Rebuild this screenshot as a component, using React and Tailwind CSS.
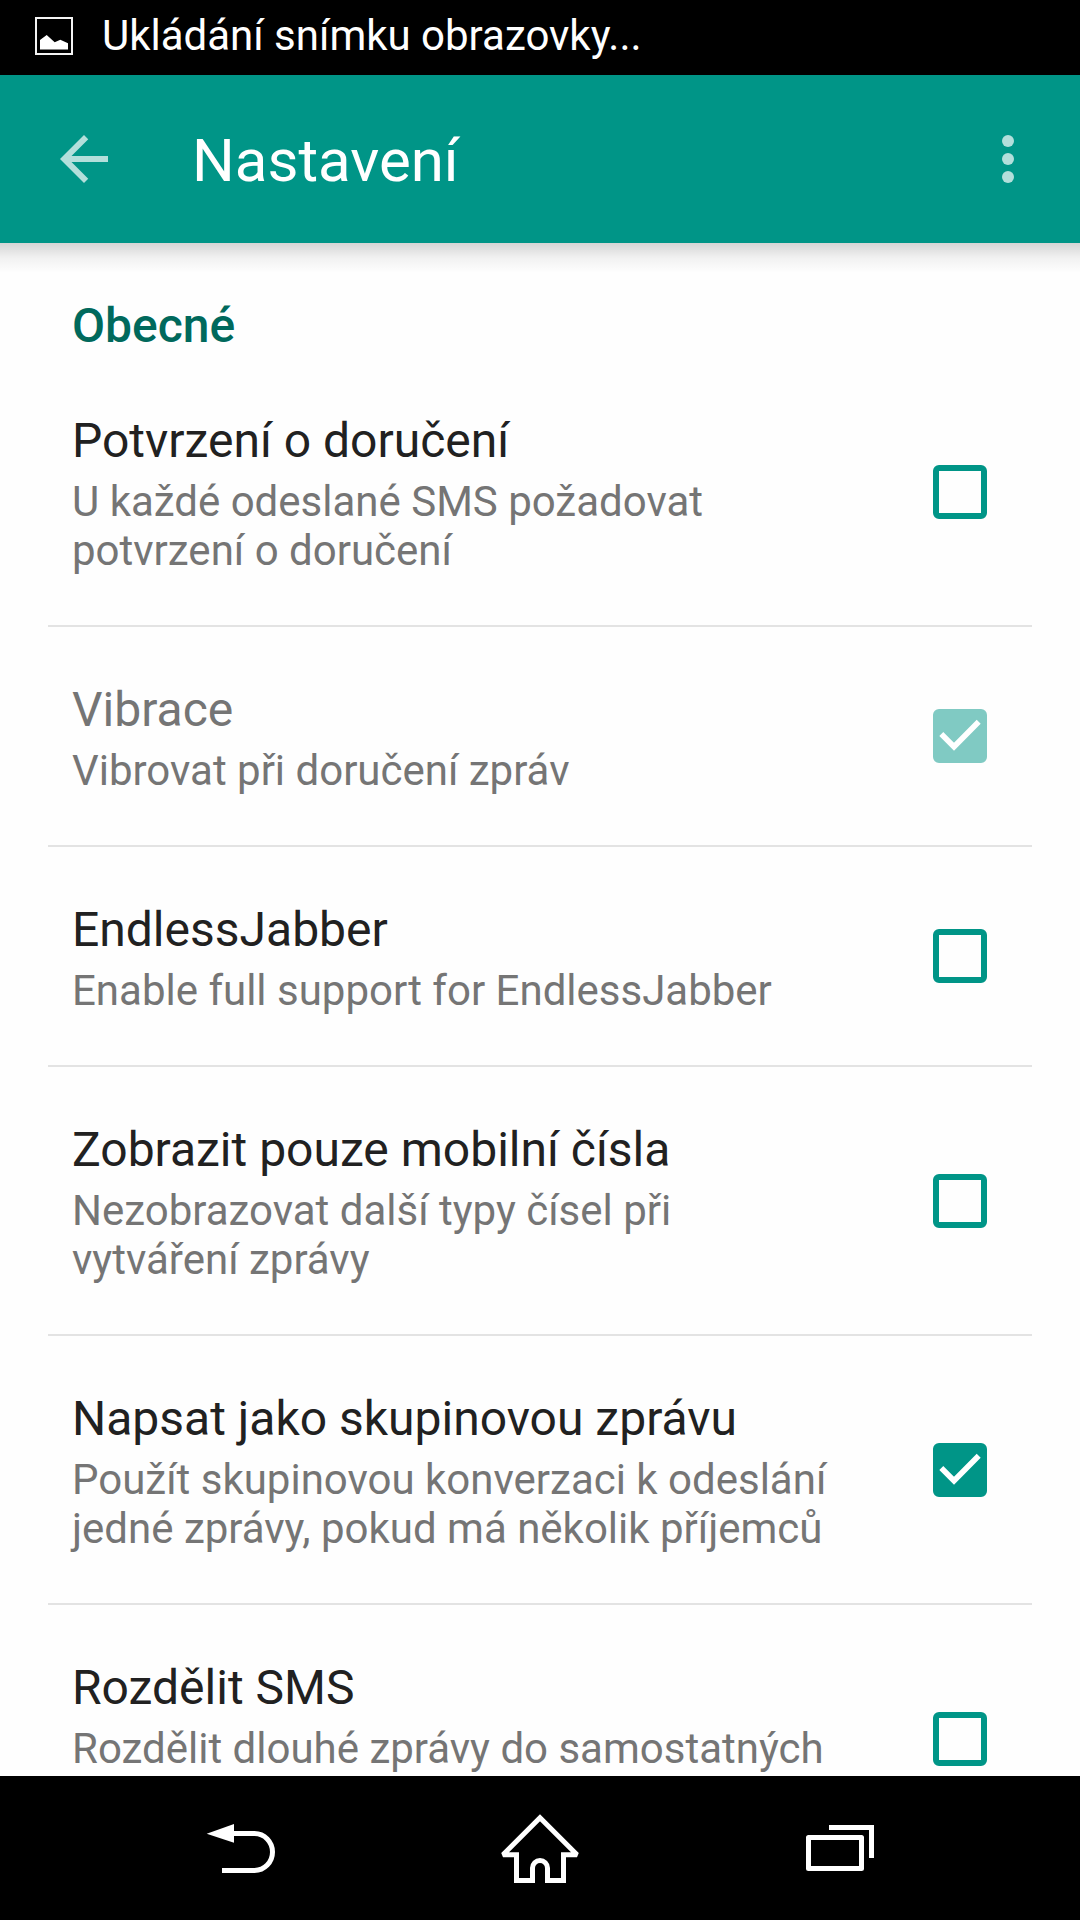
import { useState } from "react";

const SETTINGS = [
  {
    id: "delivery",
    title: "Potvrzení o doručení",
    summary: "U každé odeslané SMS požadovat potvrzení o doručení",
  },
  {
    id: "vibrate",
    title: "Vibrace",
    summary: "Vibrovat při doručení zpráv",
    checked: true,
    disabled: true,
  },
  {
    id: "endless",
    title: "EndlessJabber",
    summary: "Enable full support for EndlessJabber",
  },
  {
    id: "mobile-only",
    title: "Zobrazit pouze mobilní čísla",
    summary: "Nezobrazovat další typy čísel při vytváření zprávy",
  },
  {
    id: "group",
    title: "Napsat jako skupinovou zprávu",
    summary: "Použít skupinovou konverzaci k odeslání jedné zprávy, pokud má několik příjemců",
    checked: true,
  },
  {
    id: "split",
    title: "Rozdělit SMS",
    summary: "Rozdělit dlouhé zprávy do samostatných",
    tall: true,
  },
];

function StatusBar() {
  return (
    <div className="flex h-[75px] shrink-0 items-center bg-black pb-[3px] pl-[35px] text-white">
      <svg className="size-[38px] shrink-0" viewBox="0 0 38 38" aria-hidden="true">
        <rect x="1" y="1" width="36" height="36" fill="none" stroke="#f4f4f4" strokeWidth="2" />
        <path d="M5 32.500V23l6.700-5 8 7.300 5.600-2.600 7.700 3.600v6.200z" fill="#fff" />
      </svg>
      <p className="ml-[29px] truncate text-[42px] leading-[50px]">Ukládání snímku obrazovky...</p>
    </div>
  );
}

function AppBar() {
  return (
    <header className="flex h-[168px] shrink-0 items-center bg-[#009587] pr-[36px] pl-[48px]">
      <button type="button" aria-label="Zpět" className="text-white/70">
        <svg className="size-[72px]" viewBox="0 0 24 24" fill="currentColor">
          <path d="M20 11H7.830l5.590-5.590L12 4l-8 8 8 8 1.410-1.410L7.830 13H20z" />
        </svg>
      </button>
      <h1 className="ml-[72px] flex-1 pt-1 text-[60px] leading-[70px] text-white">Nastavení</h1>
      <button type="button" aria-label="Další možnosti" className="text-white/70">
        <svg className="size-[72px]" viewBox="0 0 24 24" fill="currentColor">
          <circle cx="12" cy="6" r="2" />
          <circle cx="12" cy="12" r="2" />
          <circle cx="12" cy="18" r="2" />
        </svg>
      </button>
    </header>
  );
}

function Checkbox({ id, checked, disabled, onChange }) {
  return (
    <span className="grid size-[54px] shrink-0 place-items-center">
      <input
        id={id}
        type="checkbox"
        checked={checked}
        disabled={disabled}
        onChange={onChange}
        className="peer col-start-1 row-start-1 size-[54px] appearance-none rounded-[6px] border-[6px] border-[#009587] checked:bg-[#009587] disabled:border-[#80cac3] disabled:checked:bg-[#80cac3]"
      />
      <svg
        className="pointer-events-none col-start-1 row-start-1 hidden size-[54px] peer-checked:block"
        viewBox="0 0 54 54"
        fill="none"
        stroke="#fff"
        strokeWidth="5.600"
        aria-hidden="true"
      >
        <path d="M8.300 25 21 37.700 45.700 12.700" />
      </svg>
    </span>
  );
}

function SettingRow({ item, checked, onToggle }) {
  return (
    <li className="mx-[48px] border-b-2 border-[#e3e3e3]">
      <label htmlFor={item.id} className="flex items-center gap-[96px] py-[50px] pr-[45px] pl-[24px]">
        <span className="flex flex-1 flex-col gap-2 pt-[5px]">
          <span
            className={
              item.disabled
                ? "text-[48px] leading-[56px] text-[#757575]"
                : "text-[48px] leading-[56px] text-[#212121]"
            }
          >
            {item.title}
          </span>
          <span
            className={
              item.tall
                ? "min-h-[98px] text-[42px] leading-[49px] text-[#757575]"
                : "text-[42px] leading-[49px] text-[#757575]"
            }
          >
            {item.summary}
          </span>
        </span>
        <Checkbox id={item.id} checked={checked} disabled={item.disabled} onChange={onToggle} />
      </label>
    </li>
  );
}

function NavButton({ label, children }) {
  return (
    <button type="button" aria-label={label} className="flex flex-1 items-center justify-center">
      <svg className="size-[90px]" viewBox="0 0 90 90" fill="none" stroke="#fff" strokeWidth="5">
        {children}
      </svg>
    </button>
  );
}

function NavBar() {
  return (
    <nav className="flex h-[144px] shrink-0 bg-black px-[90px]">
      <NavButton label="Zpět">
        <path d="M38 30.500H59.500a18 18.500 0 0 1 0 37H27" />
        <path d="M11.700 30.700 39 21v18.700z" fill="#fff" stroke="none" />
      </NavButton>
      <NavButton label="Domů">
        <path
          strokeMiterlimit="2"
          d="M45 14.700 8 51.700H21.500V77.500H37.500V65a7.500 7.500 0 0 1 15 0V77.500H68.500V51.700H82z"
        />
      </NavButton>
      <NavButton label="Poslední aplikace">
        <rect x="13.500" y="34.500" width="53" height="31" strokeLinejoin="round" />
        <path d="M34 24.500H76.500V55" />
      </NavButton>
    </nav>
  );
}

export default function App() {
  const [values, setValues] = useState(() =>
    Object.fromEntries(SETTINGS.map((s) => [s.id, Boolean(s.checked)]))
  );
  const toggle = (id) => setValues((v) => ({ ...v, [id]: !v[id] }));

  return (
    <div className="flex h-screen flex-col bg-[#fefefe] font-[Roboto,sans-serif]">
      <StatusBar />
      <AppBar />
      <main className="relative min-h-0 flex-1">
        <div className="pointer-events-none absolute inset-x-0 top-0 h-[30px] bg-linear-to-b from-black/16 via-black/5 to-transparent" />
        <div className="h-full overflow-y-auto pt-[55px] [scrollbar-width:none]">
          <h2 className="mb-1 px-[72px] text-[48px] leading-[56px] font-medium text-[#00695c]">Obecné</h2>
          <ul>
            {SETTINGS.map((item) => (
              <SettingRow
                key={item.id}
                item={item}
                checked={values[item.id]}
                onToggle={() => toggle(item.id)}
              />
            ))}
          </ul>
        </div>
      </main>
      <NavBar />
    </div>
  );
}
